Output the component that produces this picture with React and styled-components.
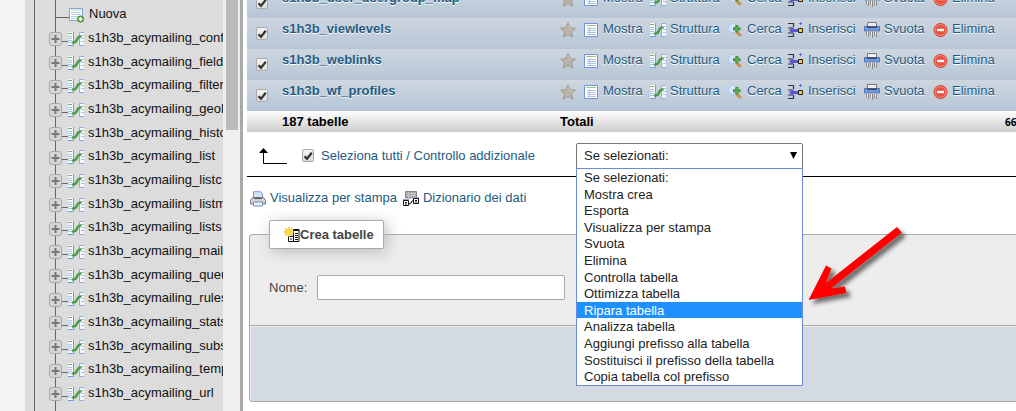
import React, { useState } from "react";
import styled, { createGlobalStyle } from "styled-components";

const GlobalStyle = createGlobalStyle`
  * {
    box-sizing: border-box;
  }
  body {
    margin: 0;
    overflow: hidden;
    background: #fff;
    color: #333;
    font-family: "Liberation Sans", Arial, sans-serif;
    font-size: 13px;
    line-height: 16px;
  }
  svg {
    flex-shrink: 0;
  }
`;

const Page = styled.div`
  display: flex;
  height: 100vh;
`;

/* navigation panel */

const Sidebar = styled.nav`
  flex: 0 0 243px;
  display: flex;
  padding-left: 25px;
  background: #f3f3f3;
  border-right: 3px solid #aaa;
  overflow: hidden;
`;

const TreePane = styled.div`
  flex: 1;
  min-width: 0;
  padding-left: 9px;
  background: #dcdcdc;
  overflow: hidden;
`;

const Tree = styled.ul`
  height: 100%;
  margin: 0;
  padding: 3px 0 0 14px;
  list-style: none;
  border-left: 1px solid #666;
  background: linear-gradient(#666, #666) 20px 0 / 1px 100% no-repeat;
`;

const TreeItem = styled.li`
  display: flex;
  align-items: center;
  height: 24px;
  &:nth-child(3n + 1) {
    height: 23px;
  }
`;

const Toggle = styled.button`
  display: flex;
  flex-shrink: 0;
  width: 13px;
  height: 14px;
  margin-top: 2px;
  padding: 0;
  border: 0;
  background: none;
  cursor: pointer;
`;

const Branch = styled.span`
  flex-shrink: 0;
  width: ${(props) => (props.$wide ? "13px" : "6px")};
  height: 1px;
  margin-top: 6px;
  margin-left: ${(props) => (props.$wide ? "7px" : "0")};
  background: #666;
`;

const TreeLink = styled.a`
  display: flex;
  color: #111;
  white-space: nowrap;
  text-decoration: none;
  svg {
    margin: 1px 4px 0 0;
  }
`;

const Scrollbar = styled.div`
  flex: 0 0 17px;
  padding: 0 2px 0 3px;
  background: #efefef;
`;

const Thumb = styled.div`
  height: 130px;
  background: #bbb;
`;

/* content */

const Content = styled.main`
  position: relative;
  flex: 1;
  min-width: 0;
  padding-left: 4px;
  overflow: hidden;
`;

const Table = styled.table`
  width: 100%;
  margin-top: -13px;
  table-layout: fixed;
  border-collapse: collapse;
`;

const Col = styled.col`
  width: ${(props) => props.$width};
`;

const Row = styled.tr`
  height: 31px;
  background: linear-gradient(#ced6df, #b6c6d7);
  td,
  th {
    padding: 3px 0 0;
    vertical-align: top;
    text-align: left;
    white-space: nowrap;
    text-shadow: 0 1px 0 #fff;
  }
`;

const CheckCell = styled.td`
  && {
    padding: 9px 0 0 9px;
  }
`;

const TotalRow = styled.tr`
  height: 21px;
  background: linear-gradient(#fff, #ccc);
  color: #000;
  th {
    padding: 0;
    text-align: left;
    white-space: nowrap;
  }
`;

const Size = styled.th`
  font-family: "Open Sans", sans-serif;
  font-size: 10px;
`;

const Link = styled.a`
  display: inline-flex;
  gap: ${(props) => props.$gap || "4px"};
  color: #235a81;
  text-decoration: none;
  svg {
    margin-top: 1px;
  }
`;

const Checkbox = styled.input.attrs({ type: "checkbox" })`
  appearance: none;
  display: block;
  width: 12px;
  height: 13px;
  margin: 0;
  border: 1px solid #aaa;
  border-radius: 2px;
  background: linear-gradient(#f4f4f4, #ddd);
  &:checked {
    background: url("data:image/svg+xml,%3Csvg xmlns='http://www.w3.org/2000/svg' viewBox='0 0 10 10'%3E%3Cpath d='M1.5 5.2 4 7.8 8.8 1.8' fill='none' stroke='%23333' stroke-width='2.2'/%3E%3C/svg%3E")
        center / 10px 10px no-repeat,
      linear-gradient(#f4f4f4, #ddd);
  }
`;

const Actions = styled.div`
  display: flex;
  align-items: center;
  height: 45px;
  padding: 3px 0 0 12px;
  border-bottom: 1px solid #000;
`;

const CheckLabel = styled.label`
  display: flex;
  align-items: center;
  gap: 7px;
  width: 274px;
  margin-left: 15px;
  color: #235a81;
`;

const SelectBox = styled.div`
  position: relative;
  flex: 0 0 227px;
`;

const Select = styled.select`
  appearance: none;
  display: block;
  width: 100%;
  height: 26px;
  padding: 0 7px;
  border: 1px solid #777;
  border-radius: 2px;
  background: #fff;
  color: #222;
  font: inherit;
`;

const Caret = styled.svg`
  position: absolute;
  top: 9px;
  right: 6px;
  pointer-events: none;
`;

const Options = styled.ul`
  position: absolute;
  top: 25px;
  left: 0;
  right: 0;
  z-index: 2;
  margin: 0;
  padding: 0;
  list-style: none;
  border: 1px solid #6b8cdb;
  background: #fff;
`;

const Option = styled.li`
  height: 17px;
  padding: 0 7px;
  line-height: 17px;
  color: ${(props) => (props.$active ? "#fff" : "#222")};
  background: ${(props) => (props.$active ? "#1e90ff" : "#fff")};
  cursor: default;
  &:nth-child(5n + 2),
  &:nth-child(5n + 4) {
    height: 16px;
  }
`;

const Tools = styled.div`
  display: flex;
  gap: 6px;
  padding: 13px 0 0 3px;
`;

const CreateForm = styled.form`
  margin: 27px 0 0 2px;
  border: 1px solid #aaa;
  border-right: 0;
  border-radius: 4px 0 0 4px;
  background: #ededed;
`;

const FormBody = styled.div`
  padding: 0 0 25px 19px;
`;

const FormTitle = styled.h2`
  display: flex;
  align-items: center;
  width: 115px;
  height: 29px;
  margin: -15px 0 0;
  padding-left: 14px;
  border: 1px solid #aaa;
  border-radius: 2px;
  background: #fff;
  box-shadow: 3px 3px 15px #bbb;
  color: #444;
  font-size: 13px;
`;

const Field = styled.label`
  display: flex;
  align-items: center;
  margin-top: 26px;
  color: #444;
`;

const FieldName = styled.span`
  width: 48px;
`;

const TextInput = styled.input`
  width: 248px;
  height: 25px;
  border: 1px solid #aaa;
  border-radius: 2px;
  background: #fff;
`;

const FormFooter = styled.div`
  height: 76px;
  border-top: 1px solid #aaa;
  border-radius: 0 0 0 4px;
  background: #d3dae3;
  box-shadow: inset 1px 1px 0 #eee;
`;

const Pointer = styled.svg`
  position: absolute;
  top: 222px;
  left: 560px;
  z-index: 3;
  pointer-events: none;
`;

/* icons */

const Icon = ({ children }) => (
  <svg width="16" height="16" viewBox="0 0 16 16" fill="none" aria-hidden="true">
    {children}
  </svg>
);

const PlusIcon = () => (
  <svg width="13" height="14" viewBox="0 0 13 14" aria-hidden="true">
    <rect x="0.5" y="0.5" width="12" height="13" rx="2.5" fill="#d6d6d6" stroke="#a8a8a8" />
    <path d="M6.5 3v8M2.5 7h8" stroke="#777" strokeWidth="2" />
  </svg>
);

const NewIcon = () => (
  <Icon>
    <path d="M.5 1.500h13v12H.5z" fill="#fff" stroke="#7fa3dc" />
    <path d="M2 3h11" stroke="#b9d3a8" />
    <path d="M2 5.500h10M2 7.500h10M2 9.500h10M2 11.500h7" stroke="#b7cdec" />
    <circle cx="11.500" cy="12" r="3.500" fill="#5b9a2d" />
    <path d="M11.500 10v4M9.500 12h4" stroke="#fff" strokeWidth="1.600" />
  </Icon>
);

const StructureIcon = () => (
  <Icon>
    <path d="M0 1h5.500v13H0z" fill="#f4f8fd" />
    <path d="M5.500 1v13.500H0" stroke="#6f9bdd" />
    <path d="M0 2.500h4" stroke="#78b55c" />
    <path d="M0 5.500h4M0 7.500h4M0 9.500h4M0 11.500h4" stroke="#a9c4ea" />
    <path d="M16 1.500h-4.500v13H16" fill="#f4f8fd" stroke="#8db0e3" />
    <path d="M13 4.500h3M13 7.500h3M13 10.500h3" stroke="#a9c4ea" />
    <path d="M5 11.500c3 .3 3-1 4-3s1-3 3.500-3" stroke="#4a9c46" strokeWidth="2.500" strokeLinecap="round" />
  </Icon>
);

const StarIcon = () => (
  <Icon>
    <path
      d="M8 .8l2.200 4.800 5.200.6-3.800 3.600 1 5.300L8 12.500l-4.600 2.600 1-5.300L.6 6.200l5.200-.6z"
      fill="#b9b4a8"
      stroke="#a19b90"
      strokeLinejoin="round"
    />
    <path d="M8 3l1.400 3.400 3.300.5" stroke="#cdc8bb" />
  </Icon>
);

const BrowseIcon = () => (
  <Icon>
    <path d="M.5 1.500h13v13H.5z" fill="#fff" stroke="#6d93d8" />
    <path d="M2 3.500h10" stroke="#9cc486" />
    <path d="M3 6.500h9M3 8.500h9M3 10.500h9M3 12.500h9M5.500 5v8" stroke="#a9c4ea" />
  </Icon>
);

const SearchIcon = () => (
  <Icon>
    <circle cx="5" cy="6" r="4.600" fill="#d3e6fa" stroke="#a9cbee" />
    <path d="M9.500 11l2.500 2" stroke="#cf9148" strokeWidth="3" strokeLinecap="round" />
    <path d="M8.800 3v7.500M5 6.800h7.500" stroke="#3c8d3a" strokeWidth="3" />
    <path d="M8.800 4v5.500M6 6.800h5.500" stroke="#66b857" />
  </Icon>
);

const InsertIcon = () => (
  <Icon>
    <path d="M0 1.500h5.500V5M0 6h4M5.500 11v3.500H0M0 11h4" stroke="#333" strokeWidth="1.200" />
    <path d="M1 8.500l4.500-4v2.500H10v3H5.500v2.500z" fill="#5b55cf" />
    <path d="M12.500 0v3M11 1.500h3" stroke="#6a66cf" />
    <path d="M10.500 6.500h4v4h-4z" fill="#fccb25" stroke="#222" />
  </Icon>
);

const EmptyIcon = () => (
  <Icon>
    <path d="M3.500 .5h9V5h-9z" fill="#eee" stroke="#777" />
    <path d="M.5 4.500h15v4.500H.5z" fill="#6c9be0" stroke="#4a78bd" />
    <path d="M3 4.500h10V6H3z" fill="#445" />
    <path d="M2.500 9.500h11v1h-11z" fill="#ddd" />
    <path d="M2.500 9.500v4M4.500 9.500V15M6.500 9.500v4M8.500 9.500V16M10.500 9.500V14M12.500 9.500V15" stroke="#888" />
    <path d="M3.500 10v3M7.500 10v4M11.500 10v3" stroke="#eee" />
  </Icon>
);

const DropIcon = () => (
  <Icon>
    <circle cx="7.500" cy="8" r="6.500" fill="#e8523f" stroke="#cf3d31" />
    <circle cx="7.500" cy="8" r="5.500" stroke="#f58d7d" />
    <path d="M4 8h7" stroke="#fff" strokeWidth="2.400" />
  </Icon>
);

const PrintIcon = () => (
  <Icon>
    <path d="M3.500 7V.7h7L12.500 3v4z" fill="#cfe2f8" stroke="#6f9bdd" />
    <path d="M2.500 6.500h11l2 3v3.500H.5V9.500z" fill="#d2d2d2" stroke="#777" />
    <path d="M4 7.500h8" stroke="#555" />
    <path d="M3.500 11h9v4h-9z" fill="#eaf2fc" stroke="#6c8fc4" />
  </Icon>
);

const DictionaryIcon = () => (
  <Icon>
    <path d="M2.500 .5h11V7h-11z" fill="#a5a5a5" stroke="#888" />
    <path d="M3 2.500h10M3 4.500h10M5.500 1v6M8.500 1v6M11.500 1v6" stroke="#c4c4c4" />
    <path d="M.5 9.500h5v5h-5zM10.500 7.500h5v5h-5z" fill="#fff" stroke="#111" />
    <path d="M2 11.500h2M2 13h2M12 9.500h2M12 11h2" stroke="#111" />
    <path d="M6 13l2-1 1-2h2" stroke="#111" />
    <path d="M0 8.500h6M10 6.500h6" stroke="#a49cd6" />
  </Icon>
);

const NewTableIcon = () => (
  <Icon>
    <path d="M9.500 2.500h5.500v12H9.500z" fill="#fff" stroke="#111" />
    <path d="M4.500 9.500h5v5h-5z" fill="#fff" stroke="#111" />
    <path d="M9 3.500h6M11 6.500h3M11 8.500h3M11 10.500h3M11 12.500h3M6 12h2" stroke="#111" />
    <path d="M5 0v10M0 5h10M1.500 1.500l7 7M8.500 1.500l-7 7" stroke="#f0b800" strokeWidth="1.300" />
    <circle cx="5" cy="5" r="2.200" fill="#ffdc2e" />
  </Icon>
);

const treeItems = [
  "conf",
  "field",
  "filter",
  "geol",
  "histo",
  "list",
  "listc",
  "listm",
  "lists",
  "mail",
  "queu",
  "rules",
  "stats",
  "subs",
  "temp",
  "url",
];

const tables = ["user_usergroup_map", "viewlevels", "weblinks", "wf_profiles"];

const rowActions = [
  { label: "Mostra", icon: BrowseIcon, gap: "3px" },
  { label: "Struttura", icon: StructureIcon },
  { label: "Cerca", icon: SearchIcon, gap: "3px" },
  { label: "Inserisci", icon: InsertIcon },
  { label: "Svuota", icon: EmptyIcon },
  { label: "Elimina", icon: DropIcon, gap: "3px" },
];

const colWidths = ["35px", "278px", "24px", "66px", "78px", "60px", "76px", "69px", "72px", "auto"];

const options = [
  "Se selezionati:",
  "Mostra crea",
  "Esporta",
  "Visualizza per stampa",
  "Svuota",
  "Elimina",
  "Controlla tabella",
  "Ottimizza tabella",
  "Ripara tabella",
  "Analizza tabella",
  "Aggiungi prefisso alla tabella",
  "Sostituisci il prefisso della tabella",
  "Copia tabella col prefisso",
];

const Navigation = () => (
  <Sidebar>
    <TreePane>
      <Tree>
        <TreeItem>
          <Branch $wide />
          <TreeLink href="#nuova">
            <NewIcon />
            Nuova
          </TreeLink>
        </TreeItem>
        {treeItems.map((name) => (
          <TreeItem key={name}>
            <Toggle type="button" aria-label={`Espandi ${name}`}>
              <PlusIcon />
            </Toggle>
            <Branch />
            <TreeLink href={`#${name}`}>
              <StructureIcon />
              s1h3b_acymailing_{name}
            </TreeLink>
          </TreeItem>
        ))}
      </Tree>
    </TreePane>
    <Scrollbar>
      <Thumb />
    </Scrollbar>
  </Sidebar>
);

const TableList = () => (
  <Table>
    <colgroup>
      {colWidths.map((width, i) => (
        <Col key={i} $width={width} />
      ))}
    </colgroup>
    <tbody>
      {tables.map((name) => (
        <Row key={name}>
          <CheckCell>
            <Checkbox defaultChecked aria-label={name} />
          </CheckCell>
          <th>
            <Link href={`#${name}`}>s1h3b_{name}</Link>
          </th>
          <td>
            <Link href="#preferiti" aria-label="Preferiti">
              <StarIcon />
            </Link>
          </td>
          {rowActions.map(({ label, icon: ActionIcon, gap }) => (
            <td key={label}>
              <Link href={`#${label}`} $gap={gap}>
                <ActionIcon />
                {label}
              </Link>
            </td>
          ))}
          <td />
        </Row>
      ))}
    </tbody>
    <tfoot>
      <TotalRow>
        <th />
        <th>187 tabelle</th>
        <th colSpan={7}>Totali</th>
        <Size>66</Size>
      </TotalRow>
    </tfoot>
  </Table>
);

const BulkActions = () => {
  const [selected, setSelected] = useState(options[0]);
  const [active, setActive] = useState("Ripara tabella");

  return (
    <Actions>
      <svg width="28" height="18" viewBox="0 0 28 18" aria-hidden="true">
        <path d="M4.500 3v13.500H28" fill="none" stroke="#000" />
        <path d="M4.500 1L9 6H0z" />
      </svg>
      <CheckLabel>
        <Checkbox defaultChecked />
        Seleziona tutti / Controllo addizionale
      </CheckLabel>
      <SelectBox>
        <Select
          aria-label="Se selezionati"
          value={selected}
          onChange={(e) => setSelected(e.target.value)}
        >
          {options.map((option) => (
            <option key={option}>{option}</option>
          ))}
        </Select>
        <Caret width="7" height="7" viewBox="0 0 7 7" aria-hidden="true">
          <path d="M0 0h7L3.500 7z" />
        </Caret>
        <Options role="listbox">
          {options.map((option) => (
            <Option
              key={option}
              role="option"
              aria-selected={option === active}
              $active={option === active}
              onMouseEnter={() => setActive(option)}
              onClick={() => setSelected(option)}
            >
              {option}
            </Option>
          ))}
        </Options>
      </SelectBox>
    </Actions>
  );
};

const CreateTable = () => (
  <CreateForm>
    <FormBody>
      <FormTitle>
        <NewTableIcon />
        Crea tabelle
      </FormTitle>
      <Field>
        <FieldName>Nome:</FieldName>
        <TextInput type="text" name="table" />
      </Field>
    </FormBody>
    <FormFooter />
  </CreateForm>
);

const App = () => {
  return (
    <Page>
      <GlobalStyle />
      <Navigation />
      <Content>
        <TableList />
        <BulkActions />
        <Tools>
          <Link href="#stampa">
            <PrintIcon />
            Visualizza per stampa
          </Link>
          <Link href="#dizionario">
            <DictionaryIcon />
            Dizionario dei dati
          </Link>
        </Tools>
        <CreateTable />
        <Pointer width="110" height="90" viewBox="0 0 110 90" aria-hidden="true">
          <defs>
            <filter id="shadow" x="-10%" y="-10%" width="130%" height="130%">
              <feDropShadow dx="4" dy="4" stdDeviation="2" floodColor="#000" floodOpacity="0.55" />
            </filter>
          </defs>
          <path
            d="M94 5l5 5.500L28 66.500 42 64.500 43.500 71 5.500 78 23 43.500 28.500 46.500 23 61z"
            fill="#fe0000"
            filter="url(#shadow)"
          />
        </Pointer>
      </Content>
    </Page>
  );
};

export default App;
